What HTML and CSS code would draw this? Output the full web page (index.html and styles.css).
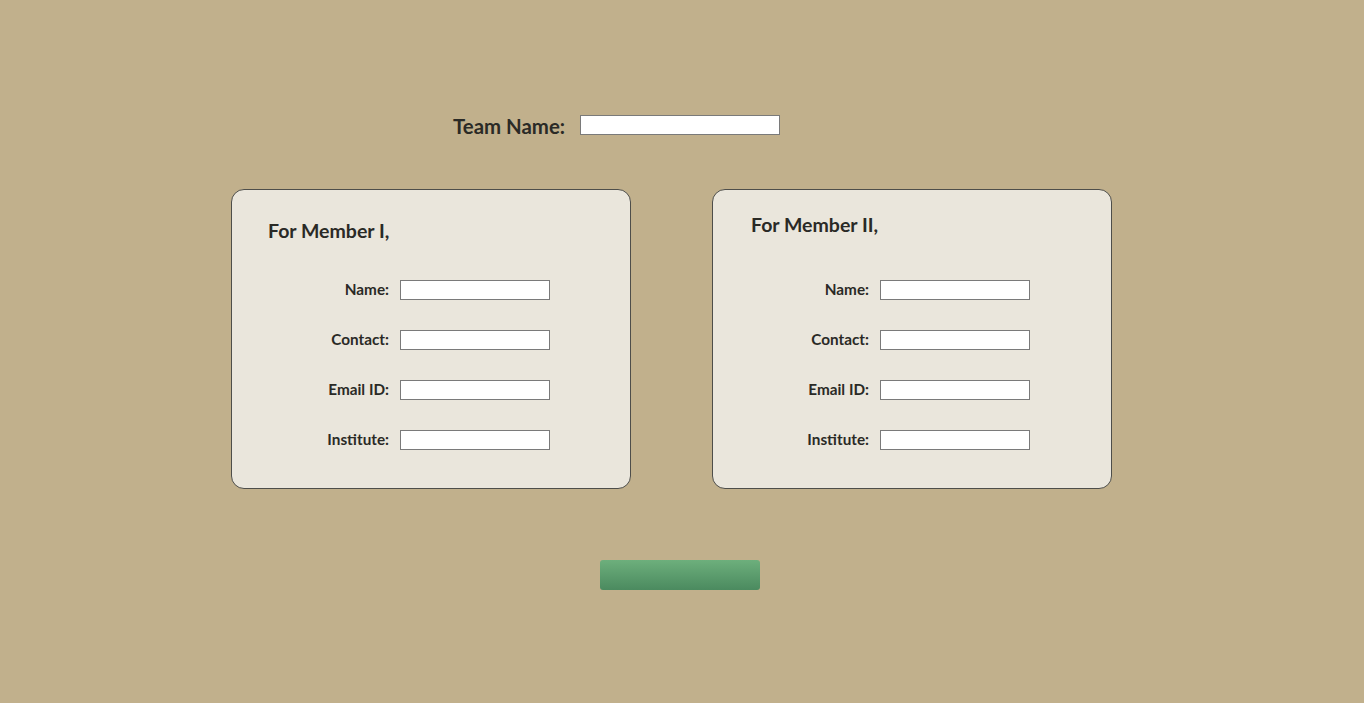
FILE: index.html
```html
<!DOCTYPE html>
<html>
<head>
<meta charset="utf-8">
<link rel="stylesheet" href="styles.css">
</head>
<body>
<main class="page">
  <div class="team-row">
    <label class="team-label">Team Name:</label>
    <input class="team-input" type="text">
  </div>
  <div class="cards">
    <section class="card card-one">
      <h2 class="card-title">For Member I,</h2>
      <div class="fields">
        <label class="field-label">Name:</label><input class="field-input" type="text">
        <label class="field-label">Contact:</label><input class="field-input" type="text">
        <label class="field-label">Email ID:</label><input class="field-input" type="text">
        <label class="field-label">Institute:</label><input class="field-input" type="text">
      </div>
    </section>
    <section class="card card-two">
      <h2 class="card-title">For Member II,</h2>
      <div class="fields">
        <label class="field-label">Name:</label><input class="field-input" type="text">
        <label class="field-label">Contact:</label><input class="field-input" type="text">
        <label class="field-label">Email ID:</label><input class="field-input" type="text">
        <label class="field-label">Institute:</label><input class="field-input" type="text">
      </div>
    </section>
  </div>
  <div class="submit-row">
    <button class="submit" type="button"></button>
  </div>
</main>
</body>
</html>
```
FILE: styles.css
```css
html, body {
  margin: 0;
  padding: 0;
  background: #c1b08c;
  font-family: "Lato", "Noto Sans", sans-serif;
  color: #2a2a26;
}
.page {
  padding-top: 115px;
}
.team-row {
  display: flex;
  align-items: center;
  padding-left: 453px;
  gap: 15px;
  height: 20px;
}
.team-label {
  font-size: 20.4px;
  font-weight: 700;
  width: 112px;
  white-space: nowrap;
  padding-top: 2px;
}
input {
  box-sizing: border-box;
  margin: 0;
  background: #fff;
  border: 1px solid #7a7a7a;
  height: 20px;
  padding: 0 3px;
}
.team-input {
  width: 200px;
}
.cards {
  display: flex;
  gap: 81px;
  padding-left: 231px;
  margin-top: 54px;
}
.card {
  box-sizing: border-box;
  width: 400px;
  height: 300px;
  background: #eae6dc;
  border: 1px solid #4e4e4a;
  border-radius: 13px;
}
.card-title {
  margin: 0;
  font-size: 19.5px;
  font-weight: 700;
  line-height: 24px;
}
.card-one .card-title {
  padding: 29px 0 0 36px;
  height: 61px;
}
.card-two .card-title {
  padding: 23px 0 0 38px;
  height: 67px;
}
.fields {
  display: grid;
  grid-template-columns: 157px 150px;
  grid-auto-rows: 20px;
  column-gap: 11px;
  row-gap: 30px;
  align-items: center;
}
.card-two .fields {
  grid-template-columns: 156px 150px;
}
.field-label {
  text-align: right;
  font-size: 15.3px;
  font-weight: 700;
  line-height: 18px;
  white-space: nowrap;
  padding-bottom: 2px;
}
.field-input {
  width: 150px;
}
.submit-row {
  padding-left: 600px;
  margin-top: 71px;
}
.submit {
  display: block;
  width: 160px;
  height: 30px;
  border: none;
  border-radius: 3px;
  background: linear-gradient(#6daf7c, #4b8a5f);
  padding: 0;
}
```
